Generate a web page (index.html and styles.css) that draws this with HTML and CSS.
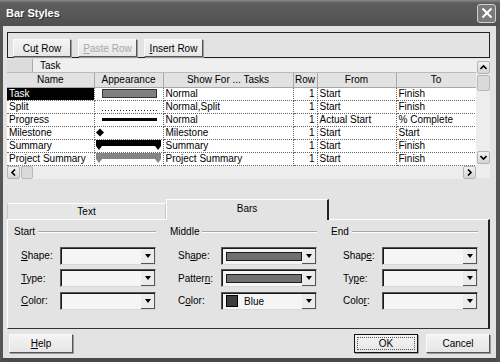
FILE: index.html
```html
<!DOCTYPE html>
<html lang="en">
<head>
    <meta charset="UTF-8">
    <title>Bar Styles</title>
    <link rel="stylesheet" href="styles.css">
</head>
<body>
<div class="window">
    <div class="titlebar">
        <span class="title">Bar Styles</span>
        <span class="close">
            <svg width="12" height="12" viewBox="0 0 12 12"><path d="M1.5 1.5L10.5 10.5M10.5 1.5L1.5 10.5" stroke="#fff" stroke-width="2"/></svg>
        </span>
    </div>

    <div class="content">
        <div class="toolbar">
            <button class="btn w-cut">Cu<u>t</u> Row</button>
            <button class="btn w-paste disabled"><u>P</u>aste Row</button>
            <button class="btn w-insert"><u>I</u>nsert Row</button>
        </div>

        <div class="grid">
            <div class="grid-main">
                <div class="edit-row">
                    <span class="corner"></span>
                    <span class="edit-text">Task</span>
                </div>
                <table class="sheet">
                    <colgroup>
                        <col class="c-name"><col class="c-app"><col class="c-show">
                        <col class="c-row"><col class="c-from"><col class="c-to">
                    </colgroup>
                    <tr class="head">
                        <th>Name</th><th>Appearance</th><th>Show For ... Tasks</th><th>Row</th><th>From</th><th>To</th>
                    </tr>
                    <tr>
                        <td class="sel">Task</td>
                        <td class="app"><svg width="68" height="12"><rect x="7.5" y="1.5" width="54" height="8" fill="#808080" stroke="#333"/></svg></td>
                        <td>Normal</td><td class="num">1</td><td>Start</td><td>Finish</td>
                    </tr>
                    <tr>
                        <td>Split</td>
                        <td class="app"><svg width="68" height="12"><line x1="7" y1="9.5" x2="62" y2="9.5" stroke="#222" stroke-dasharray="1 2"/></svg></td>
                        <td>Normal,Split</td><td class="num">1</td><td>Start</td><td>Finish</td>
                    </tr>
                    <tr>
                        <td>Progress</td>
                        <td class="app"><svg width="68" height="12"><rect x="7" y="4" width="55" height="3" fill="#000"/></svg></td>
                        <td>Normal</td><td class="num">1</td><td>Actual Start</td><td>% Complete</td>
                    </tr>
                    <tr>
                        <td>Milestone</td>
                        <td class="app"><svg width="68" height="12"><polygon points="5,1.5 9,5.5 5,9.5 1,5.5" fill="#000"/></svg></td>
                        <td>Milestone</td><td class="num">1</td><td>Start</td><td>Start</td>
                    </tr>
                    <tr>
                        <td>Summary</td>
                        <td class="app"><svg width="68" height="12"><polygon points="1,0 66,0 66,6 63,10 60,6 7,6 4,10 1,6" fill="#000"/></svg></td>
                        <td>Summary</td><td class="num">1</td><td>Start</td><td>Finish</td>
                    </tr>
                    <tr>
                        <td>Project Summary</td>
                        <td class="app"><svg width="68" height="12"><polygon points="1,0 66,0 66,6 63,10 60,6 7,6 4,10 1,6" fill="#858585"/></svg></td>
                        <td>Project Summary</td><td class="num">1</td><td>Start</td><td>Finish</td>
                    </tr>
                </table>
                <div class="hscroll">
                    <span class="sbtn"><svg width="7" height="7" viewBox="0 0 7 7"><path d="M5 0.5L2 3.5L5 6.5" fill="none" stroke="#000" stroke-width="1.6"/></svg></span>
                    <span class="sthumb h"></span>
                    <span class="strack"></span>
                    <span class="sbtn"><svg width="7" height="7" viewBox="0 0 7 7"><path d="M2 0.5L5 3.5L2 6.5" fill="none" stroke="#000" stroke-width="1.6"/></svg></span>
                </div>
            </div>
            <div class="vscroll">
                <span class="sbtn"><svg width="7" height="7" viewBox="0 0 7 7"><path d="M0.5 5L3.5 2L6.5 5" fill="none" stroke="#000" stroke-width="1.6"/></svg></span>
                <span class="sthumb v"></span>
                <span class="strack"></span>
                <span class="sbtn"><svg width="7" height="7" viewBox="0 0 7 7"><path d="M0.5 2L3.5 5L6.5 2" fill="none" stroke="#000" stroke-width="1.6"/></svg></span>
                <span class="corner-box"></span>
            </div>
        </div>

        <div class="tabs">
            <span class="tab">Text</span>
            <span class="tab active">Bars</span>
        </div>
        <div class="panel">
            <div class="group g-start">
                <div class="legend">Start</div>
                <label><u>S</u>hape:</label>
                <div class="combo"><span class="value"></span><span class="drop"></span></div>
                <label><u>T</u>ype:</label>
                <div class="combo"><span class="value"></span><span class="drop"></span></div>
                <label><u>C</u>olor:</label>
                <div class="combo"><span class="value"></span><span class="drop"></span></div>
            </div>
            <div class="group g-middle">
                <div class="legend">Middle</div>
                <label>Sh<u>a</u>pe:</label>
                <div class="combo"><span class="value"><span class="bar"></span></span><span class="drop"></span></div>
                <label>Patter<u>n</u>:</label>
                <div class="combo"><span class="value"><span class="bar"></span></span><span class="drop"></span></div>
                <label>C<u>o</u>lor:</label>
                <div class="combo"><span class="value"><span class="swatch"></span>Blue</span><span class="drop"></span></div>
            </div>
            <div class="group g-end">
                <div class="legend">End</div>
                <label>Shap<u>e</u>:</label>
                <div class="combo"><span class="value"></span><span class="drop"></span></div>
                <label>Ty<u>p</u>e:</label>
                <div class="combo"><span class="value"></span><span class="drop"></span></div>
                <label>Colo<u>r</u>:</label>
                <div class="combo"><span class="value"></span><span class="drop"></span></div>
            </div>
        </div>

        <div class="footer">
            <button class="btn w-foot"><u>H</u>elp</button>
            <span class="spacer"></span>
            <button class="btn w-foot default"><span class="focus">OK</span></button>
            <button class="btn w-foot">Cancel</button>
        </div>
    </div>
</div>
</body>
</html>
```

FILE: styles.css
```css
* {
    box-sizing: border-box;
}
body {
    margin: 0;
    font-family: 'Liberation Sans', Arial, sans-serif;
    font-size: 10px;
    color: #000;
    background: #e3e3e3;
}
.window {
    width: 500px;
    height: 362px;
    display: flex;
    flex-direction: column;
    background: #e3e3e3;
    border-left: 3px solid #555;
    border-right: 4px solid #555;
    border-bottom: 4px solid #4a4a4a;
}
.titlebar {
    height: 26px;
    margin: 0 -4px 0 -3px;
    padding: 0 4px 0 6px;
    display: flex;
    align-items: center;
    justify-content: space-between;
    background: linear-gradient(#8a8a8a 0, #5e5e5e 3px, #575757 60%, #4f4f4f 100%);
}
.title {
    color: #fff;
    font-weight: bold;
    font-size: 11px;
    text-shadow: 1px 1px 0 #333;
}
.close {
    width: 19px;
    height: 19px;
    display: flex;
    align-items: center;
    justify-content: center;
    background: #7a7a7a;
    border: 1px solid #d0d0d0;
    border-radius: 3px;
}
.content {
    flex: 1;
    display: flex;
    flex-direction: column;
    padding: 6px 6px 0 4px;
}

/* buttons */
.btn {
    font: inherit;
    height: 18px;
    padding: 0;
    background: linear-gradient(#f4f4f4, #e6e6e6);
    border: 1px solid;
    border-color: #fafafa #555 #555 #fafafa;
    box-shadow: 1px 1px 0 #9a9a9a;
    color: #000;
}
.btn.disabled {
    color: #a8a8a8;
}
.w-cut { width: 58px; }
.w-paste { width: 59px; }
.w-insert { width: 59px; }
.w-foot { width: 64px; height: 19px; }
.btn.default {
    border: 1px solid #111;
    padding: 2px;
}
.focus {
    display: block;
    height: 100%;
    line-height: 12px;
    border: 1px dotted #555;
}

.toolbar {
    height: 26px;
    display: flex;
    gap: 7px;
    padding: 6px 5px 0 5px;
    border: 1px solid #222;
}

/* grid */
.grid {
    margin-top: 1px;
    display: flex;
    height: 119px;
}
.grid-main {
    width: 469px;
    display: flex;
    flex-direction: column;
}
.edit-row {
    height: 14px;
    display: flex;
    background: #efefef;
    border-bottom: 1px solid #bbb;
}
.corner {
    width: 26px;
    background: #dcdcdc;
    border-right: 1px solid #aaa;
}
.edit-text {
    padding-left: 7px;
    line-height: 13px;
}
.sheet {
    border-collapse: collapse;
    table-layout: fixed;
    width: 469px;
    background: #fff;
}
.c-name { width: 87px; }
.c-app { width: 69px; }
.c-show { width: 130px; }
.c-row { width: 24px; }
.c-from { width: 79px; }
.c-to { width: 80px; }
.sheet th {
    height: 14px;
    padding: 0;
    font-weight: normal;
    background: #e2e2e2;
    border-right: 1px solid #a8a8a8;
    border-bottom: 1px solid #a8a8a8;
    white-space: nowrap;
}
.sheet td {
    height: 13px;
    padding: 0 2px;
    line-height: 12px;
    white-space: nowrap;
    overflow: hidden;
    border-right: 1px dotted #666;
    border-bottom: 1px dotted #666;
}
.sheet td.sel {
    background: #000;
    color: #fff;
}
.sheet td.app {
    padding: 0;
}
.sheet td.app svg {
    display: block;
}
.sheet td.num {
    text-align: right;
}
.hscroll {
    height: 13px;
    display: flex;
    background: #ededed;
}
.vscroll {
    width: 15px;
    display: flex;
    flex-direction: column;
    padding-left: 1px;
    background: #ededed;
}
.sbtn {
    width: 13px;
    height: 13px;
    display: flex;
    align-items: center;
    justify-content: center;
    background: linear-gradient(#f2f2f2, #d4d4d4);
    border: 1px solid #b4b4b4;
    border-radius: 2px;
}
.vscroll .sbtn {
    margin-top: 2px;
}
.sthumb {
    background: #dadada;
    border: 1px solid #b8b8b8;
    border-radius: 2px;
}
.sthumb.h {
    width: 12px;
    margin-left: 1px;
}
.sthumb.v {
    height: 16px;
    margin-top: 1px;
}
.strack {
    flex: 1;
}
.corner-box {
    height: 14px;
}

/* tabs */
.tabs {
    margin-top: 21px;
    height: 20px;
    display: flex;
    align-items: flex-end;
    padding-left: 0;
}
.tab {
    width: 159px;
    height: 16px;
    text-align: center;
    line-height: 15px;
    background: #e6e6e6;
    border: 1px solid #c8c8c8;
    border-top-color: #fff;
    border-bottom: none;
}
.tab.active {
    width: 163px;
    height: 21px;
    margin-bottom: -1px;
    line-height: 17px;
    background: #e3e3e3;
    border-color: #fff;
    border-right: 2px solid #222;
    position: relative;
}
.panel {
    height: 110px;
    display: grid;
    grid-template-columns: 142px 147px 147px;
    column-gap: 14px;
    padding: 4px 0 0 6px;
    border: 1px solid #fff;
    border-right: 2px solid #222;
    border-bottom: 1px solid #333;
}
.group {
    display: grid;
    grid-template-columns: 1fr 96px;
    grid-auto-rows: 18px;
    row-gap: 4.5px;
    align-items: center;
    align-content: start;
}
.g-start label { padding-left: 7px; }
.g-middle label { padding-left: 8px; }
.g-end label { padding-left: 12px; }
.legend {
    grid-column: 1 / 3;
    height: 12px;
    margin-bottom: 3px;
    display: flex;
    align-items: center;
    gap: 3px;
}
.legend::after {
    content: "";
    flex: 1;
    height: 0;
    border-top: 1px solid #a8a8a8;
    border-bottom: 1px solid #fff;
}
.combo {
    height: 18px;
    display: flex;
    background: #f5f5f5;
    border: 1px solid;
    border-color: #555 #d8d8d8 #d8d8d8 #555;
    box-shadow: inset 1px 1px 0 #1a1a1a;
    padding: 1px 0 0 1px;
}
.combo .value {
    flex: 1;
    display: flex;
    align-items: center;
    padding-left: 3px;
    gap: 6px;
}
.combo .bar {
    width: 76px;
    height: 9px;
    background: #707070;
    border: 1px solid #1a1a1a;
}
.combo .swatch {
    width: 12px;
    height: 12px;
    background: #3c3c3c;
    border: 1px solid #000;
}
.combo .drop {
    width: 14px;
    position: relative;
    background: #ececec;
    border-right: 1px solid #555;
    border-bottom: 1px solid #555;
}
.combo .drop::after {
    content: "";
    position: absolute;
    left: 4px;
    top: 5px;
    border-left: 3px solid transparent;
    border-right: 3px solid transparent;
    border-top: 4px solid #000;
}

/* footer */
.footer {
    margin-top: 5px;
    display: flex;
    gap: 8px;
    padding-left: 2px;
}
.spacer {
    flex: 1;
}
```
